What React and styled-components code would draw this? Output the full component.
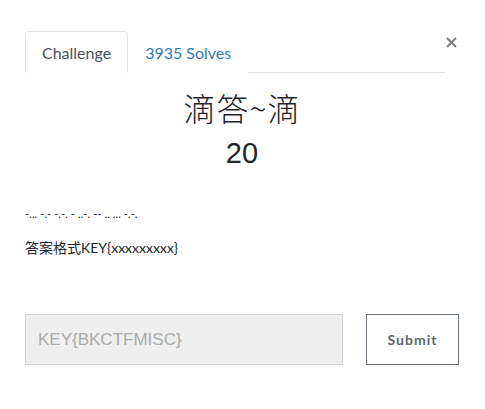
import React from "react";
import styled, { createGlobalStyle } from "styled-components";

const GlobalStyle = createGlobalStyle`
  body {
    margin: 0;
    background: #fff;
    font-family: "Lato", "Noto Sans CJK SC", sans-serif;
  }
`;

const Modal = styled.div`
  position: relative;
  width: 485px;
  height: 409px;
  box-sizing: border-box;
  padding: 31px 26px 0 25px;
  color: #212529;
`;

const CloseButton = styled.button`
  position: absolute;
  top: 37px;
  right: 28px;
  border: none;
  background: none;
  padding: 0;
  color: #7d7d7d;
  cursor: pointer;
  line-height: 0;
`;

const Tabs = styled.div`
  display: flex;
  margin-right: 14px;
  border-bottom: 1px solid #dee2e6;
`;

const Tab = styled.div`
  height: 42px;
  box-sizing: border-box;
  padding: 0 16px;
  display: flex;
  align-items: center;
  font-size: 16px;
  margin-bottom: -1px;
  border: 1px solid ${(p) => (p.active ? "#dee2e6" : "transparent")};
  border-bottom-color: ${(p) => (p.active ? "#fff" : "transparent")};
  border-radius: 4px 4px 0 0;
  background: #fff;
  color: ${(p) => (p.active ? "#495057" : "#337ab7")};
`;

const Header = styled.div`
  display: flex;
  flex-direction: column;
  align-items: center;
  padding-top: 14px;
`;

const Name = styled.h2`
  margin: 0;
  font-family: "Noto Sans CJK SC", sans-serif;
  font-size: 32px;
  font-weight: 300;
  letter-spacing: 1px;
  line-height: 40px;
`;

const Value = styled.h3`
  margin: 6px 0 0;
  font-family: "Liberation Sans", sans-serif;
  font-size: 29px;
  font-weight: 400;
  line-height: 40px;
`;

const Description = styled.div`
  padding-top: 32px;
  line-height: 18px;
`;

const Para = styled.p`
  margin: 0 0 ${(p) => p.gap || "17px"};
  font-size: ${(p) => p.size || "12px"};
  letter-spacing: ${(p) => p.spacing || "0"};
`;

const AnswerRow = styled.div`
  display: flex;
  align-items: stretch;
  gap: 23px;
  margin-top: 57px;
`;

const AnswerInput = styled.input`
  width: 318px;
  height: 51px;
  box-sizing: border-box;
  background: #efefef;
  border: 1px solid #d1d5da;
  padding: 0 12px;
  font-family: "Liberation Sans", Arial, sans-serif;
  font-size: 17px;
  color: #495057;
  outline: none;
  &::placeholder {
    color: #aaa;
  }
`;

const SubmitButton = styled.button`
  width: 93px;
  height: 51px;
  box-sizing: border-box;
  background: #fff;
  border: 1px solid #6c757d;
  font-family: "Lato", sans-serif;
  font-weight: 700;
  font-size: 14px;
  letter-spacing: 1px;
  color: #5f6771;
  cursor: pointer;
`;

export default function App() {
  return (
    <>
      <GlobalStyle />
      <Modal>
        <CloseButton aria-label="Close">
          <svg width="11" height="11" viewBox="0 0 11 11">
            <path d="M1 1L10 10M10 1L1 10" stroke="currentColor" strokeWidth="2" />
          </svg>
        </CloseButton>
        <Tabs>
          <Tab active>Challenge</Tab>
          <Tab>3935 Solves</Tab>
        </Tabs>
        <Header>
          <Name>滴答~滴</Name>
          <Value>20</Value>
        </Header>
        <Description>
          <Para size="11px" spacing="0.1px" gap="16px">-... -.- -.-. - ..-. -- .. ... -.-.</Para>
          <Para size="14px">答案格式KEY&#123;xxxxxxxxx&#125;</Para>
        </Description>
        <AnswerRow>
          <AnswerInput placeholder="KEY{BKCTFMISC}" />
          <SubmitButton>Submit</SubmitButton>
        </AnswerRow>
      </Modal>
    </>
  );
}
